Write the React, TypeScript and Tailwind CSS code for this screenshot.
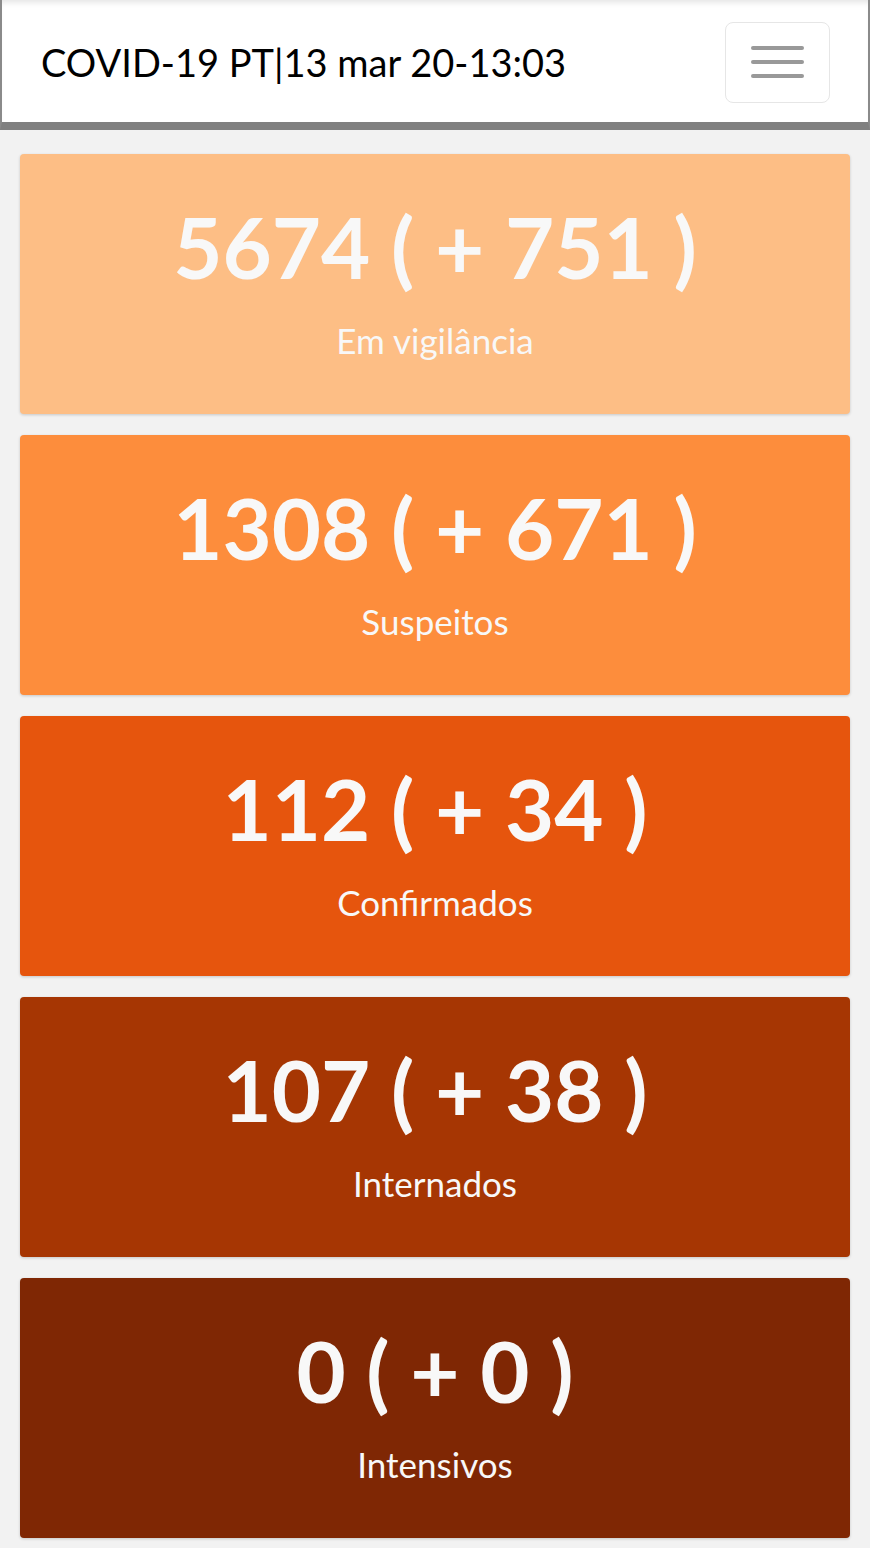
import React from "react";

const stats = [
  { total: 5674, delta: 751, label: "Em vigilância", bg: "bg-[#fdbe85]" },
  { total: 1308, delta: 671, label: "Suspeitos", bg: "bg-[#fd8d3c]" },
  { total: 112, delta: 34, label: "Confirmados", bg: "bg-[#e6550d]" },
  { total: 107, delta: 38, label: "Internados", bg: "bg-[#a63603]" },
  { total: 0, delta: 0, label: "Intensivos", bg: "bg-[#7f2704]" },
];

function StatCard({ total, delta, label, bg }: (typeof stats)[number]) {
  return (
    <div
      className={`${bg} flex h-[260px] flex-col items-center rounded-[4px] pt-[40px] text-[#f8f8f8] shadow-[0_1px_3px_rgba(0,0,0,0.18)]`}
    >
      <div className="text-[85px] font-bold leading-[104px]">
        {total} ( + {delta} )
      </div>
      <div className="mt-[22px] text-[35px] leading-[40px]">{label}</div>
    </div>
  );
}

export default function App() {
  return (
    <div
      className="min-h-[1548px] bg-[#f2f2f2]"
      style={{ fontFamily: "Lato, 'Noto Sans', sans-serif" }}
    >
      {/* Navbar */}
      <header className="flex h-[130px] items-center justify-between border-x-2 border-b-[8px] border-x-[#8a8a8a] border-b-[#808080] bg-white pl-[39px] pr-[38px] pt-[2px] shadow-[inset_0_6px_6px_-4px_rgba(0,0,0,0.12)]">
        <span className="text-[38px] leading-none text-black">COVID-19 PT|13 mar 20-13:03</span>
        <button
          type="button"
          className="flex h-[81px] w-[105px] flex-col items-center justify-center gap-[10px] rounded-[8px] border border-[#e6e6e6]"
        >
          <span className="block h-[4px] w-[53px] rounded-full bg-[#999]" />
          <span className="block h-[4px] w-[53px] rounded-full bg-[#999]" />
          <span className="block h-[4px] w-[53px] rounded-full bg-[#999]" />
        </button>
      </header>

      {/* Stats */}
      <main className="flex flex-col gap-[21px] px-[20px] pt-[24px] pb-[10px]">
        {stats.map((s) => (
          <StatCard key={s.label} {...s} />
        ))}
      </main>
    </div>
  );
}
